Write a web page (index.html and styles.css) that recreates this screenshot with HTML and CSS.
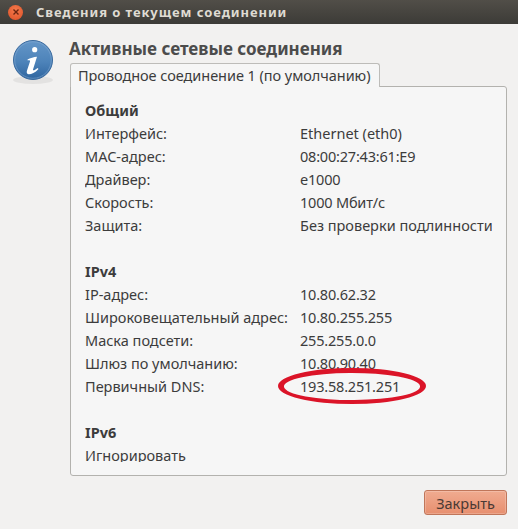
FILE: index.html
```html
<!doctype html>
<html lang="ru">

<head>
  <meta charset="UTF-8">
  <title>Сведения о текущем соединении</title>
  <link rel="stylesheet" href="styles.css">
</head>

<body>
  <header class="titlebar">
    <span class="close-btn">
      <svg viewBox="0 0 8 8" width="8" height="8"><path d="M1.5,1.5 L6.5,6.5 M6.5,1.5 L1.5,6.5" stroke="#6a2410" stroke-width="1.4" fill="none"/></svg>
    </span>
    <h1>Сведения о текущем соединении</h1>
  </header>

  <main class="dialog">
    <svg class="info-icon" viewBox="0 0 44 48" width="44" height="48">
      <defs>
        <linearGradient id="ball" x1="0" y1="0" x2="0" y2="1">
          <stop offset="0" stop-color="#6496c8"/>
          <stop offset="0.55" stop-color="#4d83b9"/>
          <stop offset="1" stop-color="#2f659f"/>
        </linearGradient>
      </defs>
      <ellipse cx="21" cy="41" rx="20" ry="4" fill="#000" opacity="0.06"/>
      <circle cx="21" cy="21" r="19.5" fill="url(#ball)" stroke="#3a6a9e" stroke-width="1"/>
      <circle cx="21" cy="21" r="18.3" fill="none" stroke="#8db2d6" stroke-width="0.8" opacity="0.6"/>
      <circle cx="22.7" cy="10.7" r="2.6" fill="#fff"/>
      <path d="M15.5,20.5 C18,19 22,18 25,17.7 L21,30.5 C20.8,32 22.5,31.5 25.5,29 L26.5,30 C23,34 19,35.5 16.5,35.3 C14.5,35 14.5,33 15,31.5 L18,22.5 C18.3,21.3 17,21 15.8,21.5 Z" fill="#fff"/>
    </svg>

    <section class="content">
      <h2>Активные сетевые соединения</h2>
      <div class="tab">Проводное соединение 1 (по умолчанию)</div>
      <div class="panel">
        <div class="rows">
          <h3>Общий</h3>
          <dl>
            <dt>Интерфейс:</dt><dd>Ethernet (eth0)</dd>
            <dt>MAC-адрес:</dt><dd class="num">08:00:27:43:61:E9</dd>
            <dt>Драйвер:</dt><dd class="num">e1000</dd>
            <dt>Скорость:</dt><dd class="num">1000 Мбит/с</dd>
            <dt>Защита:</dt><dd>Без проверки подлинности</dd>
          </dl>
          <h3 class="group">IPv4</h3>
          <dl>
            <dt>IP-адрес:</dt><dd class="num">10.80.62.32</dd>
            <dt>Широковещательный адрес:</dt><dd class="num">10.80.255.255</dd>
            <dt>Маска подсети:</dt><dd class="num">255.255.0.0</dd>
            <dt>Шлюз по умолчанию:</dt><dd class="num">10.80.90.40</dd>
            <dt>Первичный DNS:</dt><dd class="num">193.58.251.251</dd>
          </dl>
          <h3 class="group">IPv6</h3>
          <p>Игнорировать</p>
        </div>
      </div>
      <footer class="actions">
        <button>Закрыть</button>
      </footer>
    </section>
  </main>

  <!-- red marker drawn over the screenshot -->
  <svg class="marker" viewBox="0 0 148 37" width="148" height="37">
    <path d="M0,18 A74,18 0 1,1 148,18 A74,18 0 1,1 0,18 Z M6,19 A68,13.5 0 1,0 142,18 A68,13.5 0 1,0 6,19 Z" fill="#db1428" fill-rule="evenodd"/>
  </svg>
</body>
</html>
```

FILE: styles.css
```css
* {
  box-sizing: border-box;
  padding: 0;
  margin: 0;
}

body {
  position: relative;
  width: 518px;
  height: 529px;
  overflow: hidden;
  background-color: #f2f1f0;
  color: #3c3c3c;
  font-family: "Noto Sans", "Open Sans", sans-serif;
  font-size: 14.5px;
}

.titlebar {
  display: flex;
  align-items: center;
  height: 24px;
  padding-left: 8px;
  background: linear-gradient(#514e48, #3c3b37);
}

.titlebar h1 {
  margin-left: 13px;
  font-size: 13px;
  font-weight: bold;
  letter-spacing: 0.92px;
  color: #dfdbd2;
}

.close-btn {
  display: flex;
  align-items: center;
  justify-content: center;
  width: 15px;
  height: 15px;
  border-radius: 50%;
  background: radial-gradient(circle at 50% 35%, #f47a4c, #dc4f26);
}

.dialog {
  display: flex;
  align-items: flex-start;
  padding: 15px 11px 0 12px;
}

.info-icon {
  flex: none;
  margin-right: 14px;
}

.content {
  width: 437px;
}

.content h2 {
  margin: -1px 0 0 -1px;
  height: 25px;
  line-height: 22px;
  font-size: 17px;
  font-weight: bold;
  color: #4c4c4c;
}

.tab {
  position: relative;
  z-index: 1;
  width: 310px;
  height: 24px;
  line-height: 22px;
  padding-left: 7px;
  background-color: #f6f6f6;
  border: 1px solid #bdbcb9;
  border-bottom: none;
  border-radius: 3px 3px 0 0;
  letter-spacing: -0.05px;
  white-space: nowrap;
}

.panel {
  height: 390px;
  margin-top: -1px;
  padding: 12px 14px 0;
  background-color: #f6f6f6;
  border: 1px solid #b3b2ae;
  border-radius: 0 3px 3px 3px;
}

/* the list scrolls in the real dialog, last row is cut off */
.rows {
  height: 363px;
  overflow: hidden;
  line-height: 23px;
}

.rows h3 {
  font-size: 14.5px;
  font-weight: bold;
}

.rows h3.group {
  margin-top: 23px;
}

.rows dl {
  display: grid;
  grid-template-columns: 215px 1fr;
}

.rows dd {
  white-space: nowrap;
}

.rows dd.num {
  letter-spacing: -0.2px;
}

.actions {
  display: flex;
  justify-content: flex-end;
  margin-top: 14px;
}

.actions button {
  width: 83px;
  height: 25px;
  background: linear-gradient(#f0ab90, #e78f6f);
  border: 1px solid #c0765a;
  border-radius: 3px;
  box-shadow: inset 0 0 0 1px rgba(255, 255, 255, 0.2);
  color: #4a3a34;
  font-family: inherit;
  font-size: 14.5px;
  cursor: pointer;
}

.marker {
  position: absolute;
  left: 278px;
  top: 368px;
}
```
